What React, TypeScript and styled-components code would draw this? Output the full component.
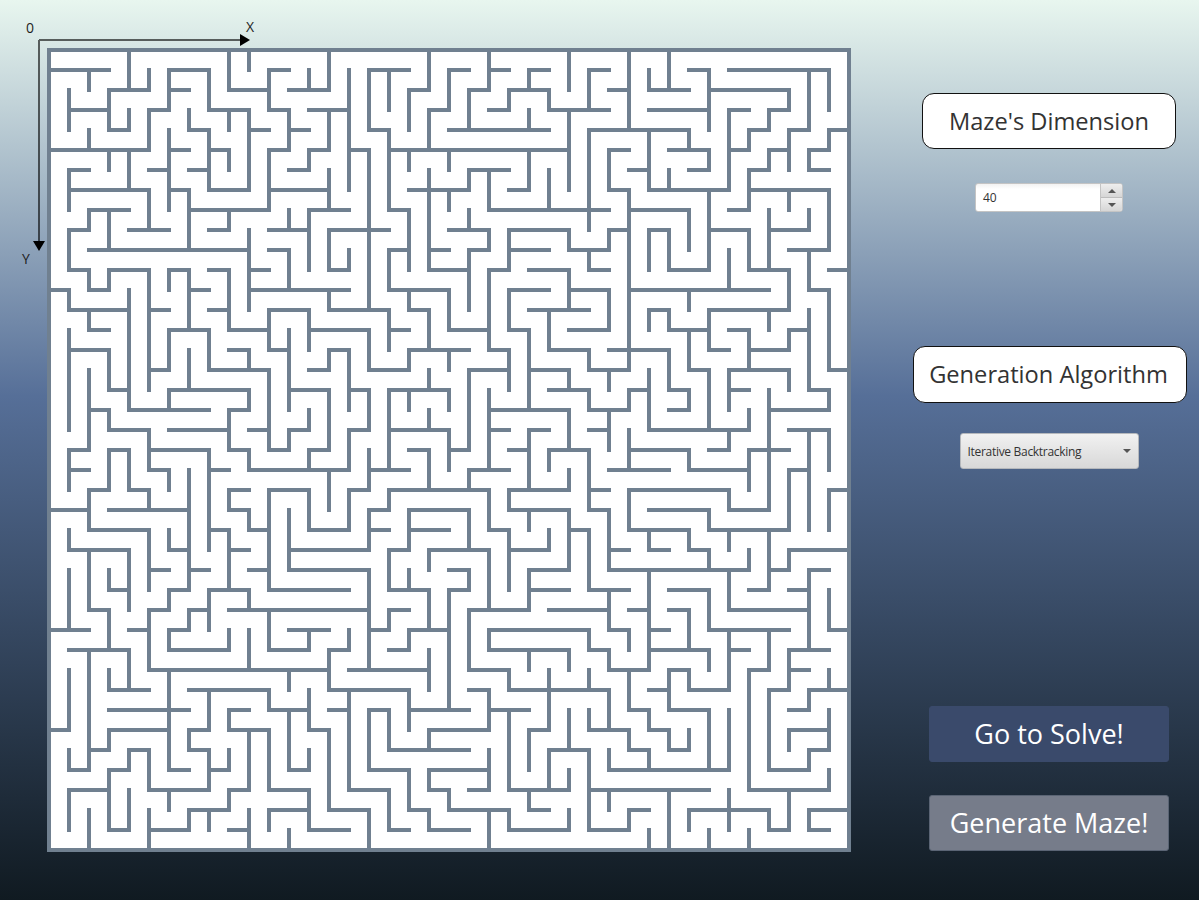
import React from "react";
import styled, { createGlobalStyle } from "styled-components";

const WALLS = `0,1 3,1|4,0 4,2|3,2 5,2|5,1 5,2|2,1 2,2|1,2 1,4|1,3 3,3|3,2 3,4 4,4 4,3|2,4 2,5
0,5 5,5 5,3 6,3 6,1 8,1 8,3 10,3 10,7 8,7 8,4 7,4 7,3|6,2 7,2|9,0 9,2 11,2
12,1 11,1 11,3 12,3 12,5 11,5 11,8 7,8|7,7 7,10|6,7 7,7|6,4 6,8|10,0 10,1|9,3 9,4|10,4 11,4
8,5 9,5 9,6|6,5 7,5|7,6 8,6|5,6 6,6|3,5 3,6|4,5 4,7|1,7 5,7 5,9|4,9 6,9|1,8 1,6 2,6
4,8 2,8 2,9 1,9 1,11 2,11 2,12 3,12 3,11 5,11 5,17|3,8 3,10|2,10 10,10|10,9 10,13
8,9 9,9 9,8|11,9 13,9|12,8 12,9|11,10 12,10 12,12|10,11 11,11|10,12 15,12
6,12 6,11 7,11 7,14|7,12 8,12|8,11 9,11 9,14 11,14|4,12 4,18 8,18|0,12 1,12 1,13 4,13
14,0 14,2 12,2|13,1 13,2|15,1 15,7|13,3 15,3|14,3 14,5 13,5 13,6 12,6|12,4 13,4
15,5 16,5 16,13|18,1 16,1 16,4 17,4 17,8 18,8 18,11|17,1 17,3|19,0 19,2 18,2 18,4|17,5 26,5|26,3 26,7
22,3 23,3 23,2 25,2 25,3 28,3|21,1 20,1 20,3 19,3 19,5|20,4 25,4|21,4 21,2 22,2|22,0 22,2|22,1 23,1
24,3 24,4|25,1 24,1 24,2|26,0 26,2|18,5 18,6|20,5 20,6|23,7 24,7 24,5|23,6 21,6 21,7 18,7|22,6 22,8 28,8
19,6 19,11 21,11|21,8 21,9|20,9 22,9 22,10 21,10 21,13|20,7 20,8|19,10 20,10|25,6 25,8|14,6 14,8|11,7 14,7
15,8 13,8 13,11|17,9 14,9 14,11 15,11 15,10|18,10 17,10 17,12 20,12 20,14 22,14|18,12 18,13 19,13 19,15
14,12 14,13 17,13 17,15|26,9 23,9 23,11 22,11 22,15 23,15 23,17|23,10 25,10|26,9 26,10 28,10
24,11 26,11 26,13|25,12 23,12 23,14 24,14 24,18|26,12 28,12 28,14 26,14|24,13 27,13|25,13 25,15 27,15 27,16 29,16|29,7 29,16
28,1 27,1 27,3|28,2 29,2|29,0 29,4|27,9 27,4 32,4|30,1 30,2 32,2|31,0 31,2|32,1 33,1 33,4|30,3 33,3
33,2 37,2 37,3 36,3 36,4 35,4 35,5 34,5|35,3 34,3 34,7 30,7 30,4|34,1 39,1 39,3|38,1 38,4 37,4 37,6|36,5 37,5
34,8 35,8 35,6 36,6 36,5|40,4 39,4 39,5 38,5 38,6 39,6|32,4 32,5|31,5 33,5 33,6 32,6|31,6 31,7|29,6 30,6
29,5 28,5 28,7 29,7|32,10 32,8 29,8|28,10 28,9 29,9|28,11 27,11 27,10|30,11 30,9 31,9 31,11 33,11 33,7
33,9 35,9 35,11 37,11 37,13 33,13 33,15 34,15|35,7 39,7 39,10 37,10|39,12 38,12 38,10|39,12 39,16 40,16
37,7 37,8|36,8 36,11|36,9 38,9 38,8|34,10 34,12|29,12 36,12|39,11 40,11|32,12 32,13
30,14 30,13 31,13 31,14 33,14|36,13 36,14|38,13 38,17 39,17 39,18 36,18
5,16 6,16 6,14 8,14 8,16 11,16 11,20 12,20 12,19 13,19 13,18|8,13 9,13|5,13 6,13|11,15 11,13 13,13 13,15|11,15 12,15|12,14 12,18
13,14 16,14 16,16 18,16 18,15 21,15|20,15 20,16|13,16 14,16 14,15 15,15 15,18|12,17 14,17 14,20 13,20 13,21|7,15 7,17
6,18 6,17 10,17 10,18 9,18 9,20 10,20 10,21 15,21 15,19 16,19 16,17 15,17|9,15 10,15 10,16|1,14 1,19
1,15 3,15 3,17 4,17|2,13 2,14 3,14|2,16 2,20 1,20 1,22|2,18 3,18 3,19 5,19 5,21 6,21 6,22|5,20 8,20 8,25|8,21 9,21
6,19 9,19|10,19 11,19|1,21 2,21|3,22 3,20 4,20 4,22 5,22 5,23|3,22 2,22 2,24 5,24 5,27|0,23 2,23|3,23 7,23
7,21 7,27 6,27 6,28 5,28 5,31|7,26 8,26|8,24 9,24 9,27|9,25 10,25|10,26 11,26|6,24 6,25 7,25|1,24 1,25 4,25 4,28
2,25 2,28 3,28 3,30|1,26 1,29|3,26 3,27 4,27|5,26 6,26|10,22 9,22 9,23 10,23 10,24 11,24|11,22 11,27 15,27
11,22 13,22 13,24 15,24 15,22 16,22 16,20|12,23 12,26|12,25 16,25 16,23 17,23 17,22 22,22|16,24 17,24|12,26 16,26 16,31
17,14 18,14|19,18 19,19|17,19 20,19 20,21|20,20 21,20 21,16 23,16|17,17 17,21|16,21 18,21|19,16 19,17|17,17 20,17 20,18
18,17 18,18|14,21 14,23|22,17 22,21|23,21 21,21 21,22|22,18 26,18 26,20|25,21 25,20 27,20 27,23 28,23 28,26|27,22 28,22
22,19 23,19|23,20 24,20|25,19 24,19 24,22|23,23 23,22 26,22 26,21|23,23 26,23 26,26 24,26 24,28 21,28 21,31 23,31 23,32 28,32 28,34
24,23 24,24|25,24 25,25 23,25|23,24 23,27|22,24 23,24|22,22 22,24|26,24 27,24 27,27 29,27|18,20 19,20 19,22
18,23 21,23 21,25|18,24 20,24|18,23 18,25 17,25 17,27 19,27 19,29|19,26 19,25 22,25 22,28|18,26 18,27
20,26 21,26 21,27 20,27 20,33|24,16 26,16 26,17|25,17 27,17 27,18 29,18 29,17 30,17
28,15 31,15 31,17 32,17 32,18 31,18|28,16 28,17|33,16 32,16 32,14|33,16 33,19|34,14 35,14 35,16|35,15 37,15 37,14 38,14
36,17 36,23 34,23 34,22 29,22 29,24 32,24 32,25 33,25 33,26|28,26 35,26 35,25|30,16 30,19 35,19 35,18
34,18 34,16 37,16 37,17|34,17 35,17|28,18 28,20|27,19 28,19|34,19 34,20 33,20|29,19 29,21|29,20 32,20 32,21 35,21
35,22 35,20 37,20|28,21 31,21|39,21 39,19 37,19|38,19 38,24|38,21 37,21 37,24 33,24 33,23 30,23|39,24 39,22 40,22
34,24 34,25|36,24 36,27 35,27|30,24 30,25 31,25|28,25 29,25|40,25 37,25 37,26 36,26|39,26 38,26 38,30|30,26 30,31|34,26 34,28 38,28
0,29 2,29|1,30 4,30 4,32|3,31 3,32 5,32|4,29 5,29|5,31 14,31|10,28 10,27 8,27 8,29|7,28 8,28|9,29 9,30 6,30 6,29 7,29 7,28
9,28 16,28|10,29 10,31|11,28 11,30 13,30 13,29|12,29 14,29|2,30 2,36 1,36 1,35|1,31 1,34 0,34|2,35 3,35 3,34 6,34|3,33 7,33
6,31 6,36 7,36|7,32 11,32 11,33 13,33|13,32 13,34 14,34 14,38 16,38 16,40|12,33 12,36 13,36 13,35|12,31 12,32
8,32 8,34 7,34 7,35 8,35 8,37 5,37 5,35 4,35 4,36 3,36 3,39 4,39 4,37|8,36 9,36 9,35|3,37 1,37 1,39|2,38 2,40|5,38 5,40
5,39 7,39 7,38 9,38 9,37 10,37 10,34 9,34 9,33 10,33|10,34 11,34 11,37 13,37 13,39 15,39|11,39 11,38 13,38|6,37 6,38
8,38 8,39|10,38 10,40|9,39 10,39|12,39 12,40|17,30 18,30 18,29 20,29|18,28 17,28 17,29 16,29|25,28 28,28|24,27 26,27
15,29 15,30 14,30 14,32 18,32 18,34|15,32 15,37 17,37 17,39 18,39|15,31 19,31|19,30 19,32|18,33 21,33|14,33 15,33
16,36 16,33 17,33 17,35 21,35|19,34 19,35|19,34 22,34 22,32 21,32|16,36 18,36 18,38 19,38 19,39 21,39
22,36 19,36 19,37 20,37 20,38 23,38 23,39 26,39 26,38|22,35 22,37 21,37|22,38 22,40|22,29 27,29 27,30 28,30 28,31 30,31
22,29 22,30 26,30 26,31|24,30 24,31|25,31 25,34 24,34 24,36|22,33 24,33|23,33 23,37 26,37 26,36|24,37 24,38 25,38
25,37 25,35 27,35 27,39 29,39 29,38 30,38|26,33 26,35|28,27 28,29 29,29 29,30|29,28 30,28|30,29 31,29|30,30 33,30 33,31
31,27 33,27 33,29 37,29|36,29 36,31 35,31 35,37 39,37 39,36|31,28 32,28 32,30|37,30 37,32 36,32 36,36 38,36 38,35 39,35 39,33
37,30 39,30|37,31 38,31|37,35 37,34 39,34|39,27 39,29 40,29|37,27 38,27|34,29 34,32 32,32 32,31 31,31 31,33 33,33 33,36
34,30 35,30|30,32 31,32|28,36 34,36 34,33|28,35 28,36|30,36 30,35 29,35 29,34|27,33 27,34 29,34|28,32 28,34|27,31 27,32
29,31 29,33 30,33 30,34 31,34 31,35 32,35 32,34|27,37 33,37|28,37 28,38|31,37 31,40|30,39 30,40
32,39 32,38 36,38 36,39 37,39 37,37|34,37 34,39|33,39 33,40|35,39 35,40|40,38 38,38 38,39 39,39|40,32 38,32 38,33 37,33|39,31 39,32`;

const wallPath = WALLS.split(/[|\n]/)
  .map((line) =>
    line
      .trim()
      .split(" ")
      .map((p, i) => {
        const [x, y] = p.split(",").map(Number);
        return `${i ? "L" : "M"}${49 + 20 * x} ${50 + 20 * y}`;
      })
      .join(""),
  )
  .join("");

const Global = createGlobalStyle`
  html, body { margin: 0; padding: 0; }
  body {
    width: 1199px;
    height: 900px;
    overflow: hidden;
    font-family: "Open Sans", "Noto Sans", sans-serif;
  }
`;

const Page = styled.div`
  width: 1199px;
  height: 900px;
  display: flex;
  background: linear-gradient(180deg, #e8f6ef 0%, #566f98 44%, #101a21 100%);
`;

const MazeArea = styled.div`
  width: 900px;
  height: 900px;
  flex: none;
`;

const MazeDrawing = styled.svg`
  display: block;
  width: 900px;
  height: 900px;
`;

const AxisLabel = styled.text`
  font-family: "Open Sans", sans-serif;
  font-size: 14px;
  fill: #1e1e1e;
`;

const Sidebar = styled.aside`
  flex: 1;
  display: flex;
  flex-direction: column;
  align-items: center;
  padding: 93px 1px 0 0;
`;

const Heading = styled.div<{ $width: number; $height: number; $gap: number; $shift?: number; $inset?: string }>`
  box-sizing: border-box;
  width: ${(p) => p.$width}px;
  height: ${(p) => p.$height}px;
  margin: 0 0 ${(p) => p.$gap}px ${(p) => p.$shift ?? 0}px;
  padding: ${(p) => p.$inset ?? "0"};
  display: flex;
  align-items: center;
  justify-content: center;
  background: #fff;
  border: 1px solid #111;
  border-radius: 12px;
  color: #333;
  font-size: 23.65px;
  white-space: nowrap;
`;

const Spinner = styled.div`
  box-sizing: border-box;
  width: 148px;
  height: 29px;
  margin-bottom: 134px;
  display: flex;
  border: 1px solid #c4c4c4;
  border-radius: 3px;
  overflow: hidden;
  background: linear-gradient(180deg, #f2f2f2 0, #fff 5px);
`;

const SpinnerValue = styled.div`
  flex: 1;
  padding-left: 7px;
  display: flex;
  align-items: center;
  font-size: 12px;
  color: #333;
`;

const SpinnerButtons = styled.div`
  width: 21px;
  flex: none;
  display: flex;
  flex-direction: column;
  border-left: 1px solid #c4c4c4;
`;

const SpinnerButton = styled.div<{ $down?: boolean }>`
  flex: 1;
  display: flex;
  align-items: center;
  justify-content: center;
  background: linear-gradient(180deg, #eeeeee, #d6d6d6);
  & + & {
    border-top: 1px solid #bdbdbd;
  }
  &::after {
    content: "";
    border-left: 4px solid transparent;
    border-right: 4px solid transparent;
    ${(p) => (p.$down ? "border-top: 4px solid #555;" : "border-bottom: 4px solid #555;")}
  }
`;

const Combo = styled.div`
  box-sizing: border-box;
  width: 179px;
  height: 36px;
  margin-bottom: 237px;
  padding: 0 7px;
  display: flex;
  align-items: center;
  justify-content: space-between;
  background: linear-gradient(180deg, #f1f1f1, #d8d8d8);
  border: 1px solid #b5b8bc;
  border-radius: 3px;
  color: #333;
  font-size: 12px;
  letter-spacing: -0.3px;
  &::after {
    content: "";
    border-left: 4px solid transparent;
    border-right: 4px solid transparent;
    border-top: 4px solid #555;
  }
`;

const ActionButton = styled.button<{ $muted?: boolean }>`
  box-sizing: border-box;
  width: 240px;
  height: 56px;
  margin-bottom: 33px;
  padding: 0 0 2px;
  background: ${(p) => (p.$muted ? "#767c8a" : "#3a4a6b")};
  border: 1px solid ${(p) => (p.$muted ? "#5a6474" : "#3a4a6b")};
  border-radius: 3px;
  color: #fff;
  font-family: inherit;
  font-size: 27px;
`;

export default function App() {
  return (
    <Page>
      <Global />
      <MazeArea>
        <MazeDrawing viewBox="0 0 900 900">
          <rect x="49" y="50" width="800" height="800" fill="#fff" />
          <path d={wallPath} fill="none" stroke="#708090" strokeWidth="4" strokeLinecap="square" strokeLinejoin="miter" />
          <rect x="49" y="50" width="800" height="800" fill="none" stroke="#708090" strokeWidth="4" />
          <path d="M39 40H241M39 40V242" fill="none" stroke="#000" strokeOpacity="0.6" strokeWidth="2" />
          <path d="M240 34L250 40L240 46Z" fill="#000" />
          <path d="M33 241H45L39 251Z" fill="#000" />
          <AxisLabel x="26" y="33">0</AxisLabel>
          <AxisLabel x="246" y="32">X</AxisLabel>
          <AxisLabel x="22" y="264">Y</AxisLabel>
        </MazeDrawing>
      </MazeArea>
      <Sidebar>
        <Heading $width={254} $height={56} $gap={34}>Maze's Dimension</Heading>
        <Spinner>
          <SpinnerValue>40</SpinnerValue>
          <SpinnerButtons>
            <SpinnerButton />
            <SpinnerButton $down />
          </SpinnerButtons>
        </Spinner>
        <Heading $width={274} $height={57} $gap={30} $shift={1} $inset="0 2px 2px 0">Generation Algorithm</Heading>
        <Combo>Iterative Backtracking</Combo>
        <ActionButton>Go to Solve!</ActionButton>
        <ActionButton $muted>Generate Maze!</ActionButton>
      </Sidebar>
    </Page>
  );
}
